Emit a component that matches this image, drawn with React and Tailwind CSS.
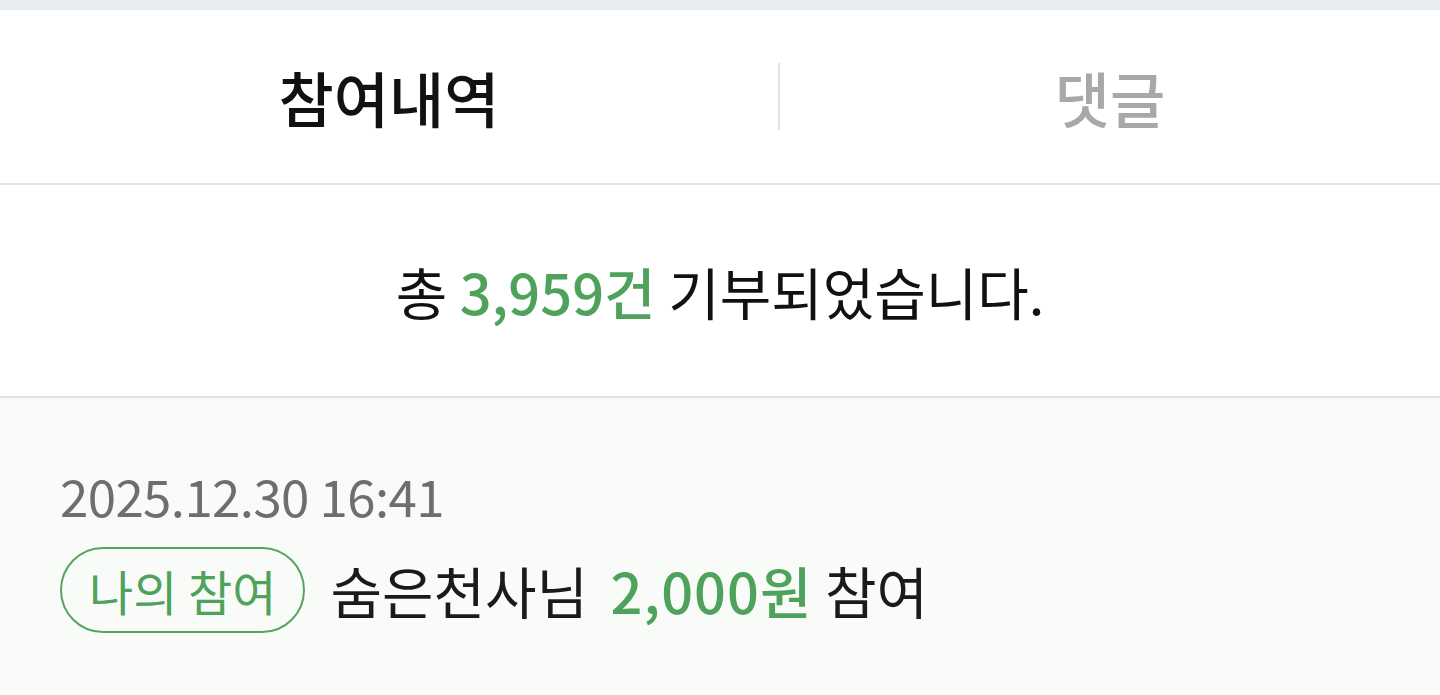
export default function App() {
  const font = { fontFamily: '"Noto Sans CJK KR", "Noto Sans", sans-serif' };

  return (
    <div className="w-[1440px] h-[695px] overflow-hidden bg-white" style={font}>
      {/* top strip */}
      <div className="h-[10px] bg-[#e9ecef]" />

      {/* tabs */}
      <div className="flex items-center h-[175px] border-b-2 border-[#e3e3e3]">
        <button className="w-[778px] h-full flex items-center justify-center text-[60px] font-medium text-[#111]">
          참여내역
        </button>
        <div className="w-[2px] h-[67px] bg-[#e3e3e3]" />
        <button className="flex-1 h-full flex items-center justify-center text-[60px] font-medium text-[#a8a8a8]">
          댓글
        </button>
      </div>

      {/* summary */}
      <div className="h-[213px] flex items-center justify-center border-b-2 border-[#e3e3e3] text-[56px] text-[#111]">
        <span>
          총 <span className="font-medium text-[#4fa25c]">3,959건</span> 기부되었습니다.
        </span>
      </div>

      {/* list */}
      <div className="bg-[#f9fbf8] h-full px-[60px] pt-[72px]">
        <p className="text-[51px] leading-none text-[#6e6e6e] tracking-[-0.6px]">2025.12.30 16:41</p>
        <div className="flex items-center gap-[25px] mt-[26px]">
          <span className="h-[86px] px-[27px] flex items-center rounded-full border-2 border-[#55a461] text-[48px] leading-none text-[#4fa25c]">
            나의 참여
          </span>
          <p className="text-[56px] leading-none text-[#1a1a1a]">
            숨은천사님{" "}
            <span className="ml-[10px] font-medium tracking-[1px] text-[#4fa25c]">2,000원</span> 참여
          </p>
        </div>
      </div>
    </div>
  );
}
